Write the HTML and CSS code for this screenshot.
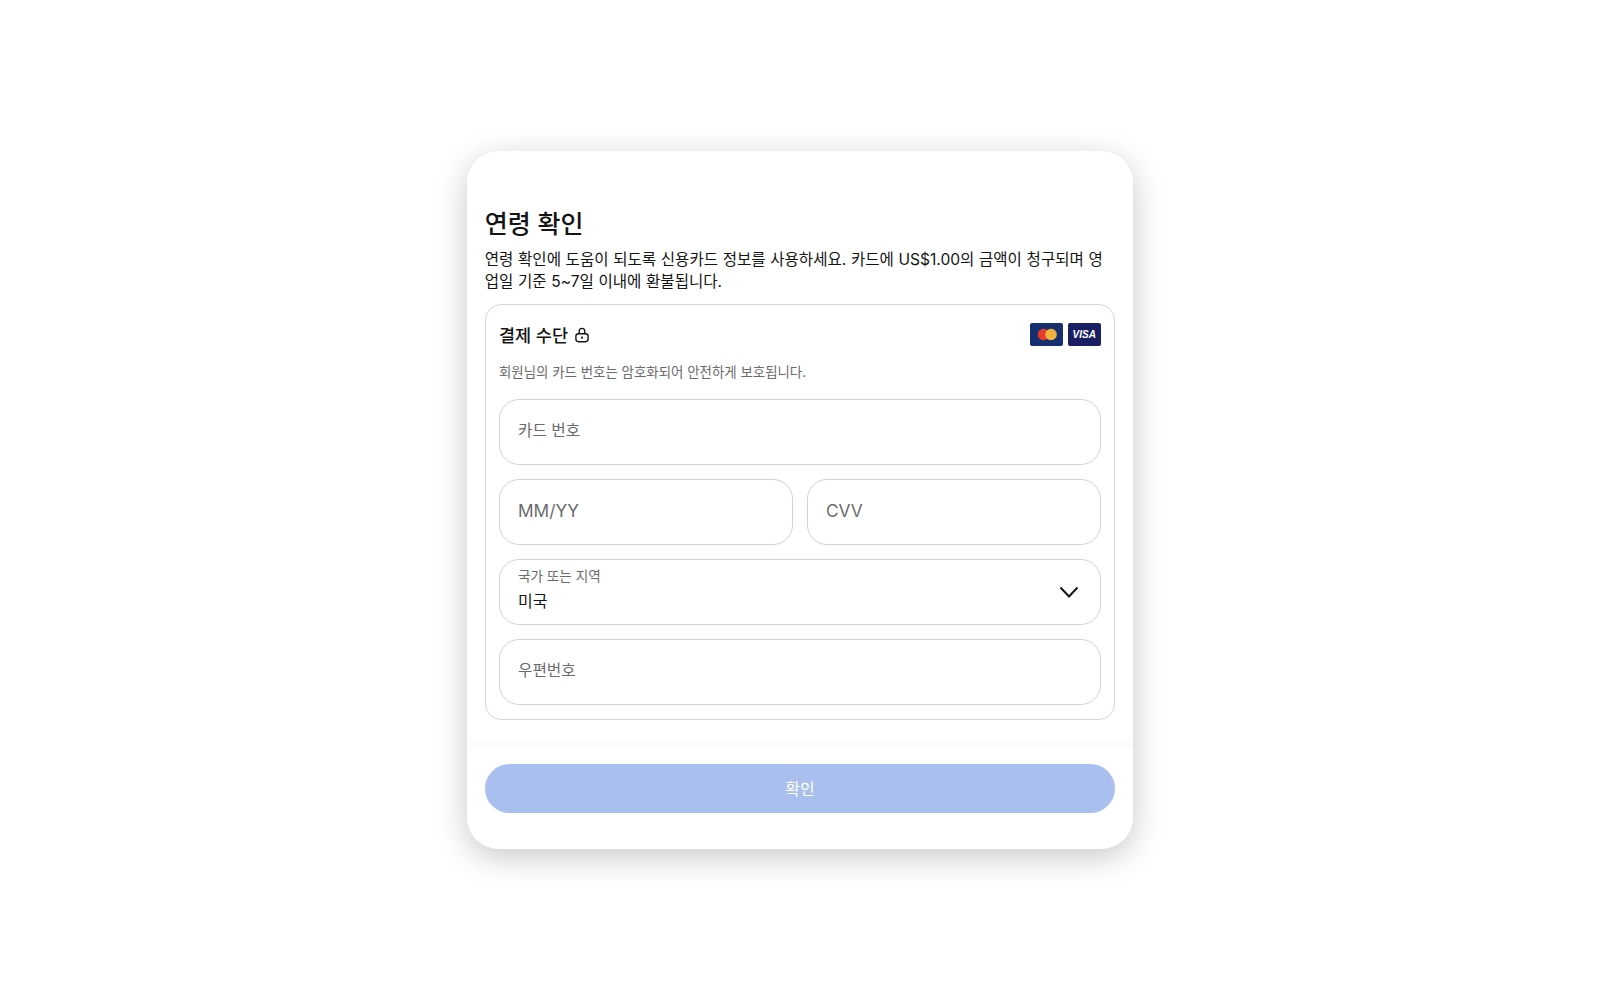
FILE: index.html
```html
<!DOCTYPE html>
<html lang="ko">
<head>
<meta charset="utf-8">
<title>연령 확인</title>
<link rel="stylesheet" href="styles.css">
</head>
<body>
<main class="card">
  <div class="content">
    <h1 class="title">연령 확인</h1>
    <p class="desc">연령 확인에 도움이 되도록 신용카드 정보를 사용하세요. 카드에 US$1.00의 금액이 청구되며 영업일 기준 5~7일 이내에 환불됩니다.</p>
    <section class="pay">
      <div class="pay-head">
        <div class="pay-title">
          <span>결제 수단</span>
          <svg class="lock" viewBox="0 0 16 16" width="16" height="16" fill="none" stroke="#141414" stroke-width="1.4">
            <path d="M5.200 7V4.200a2.800 2.800 0 0 1 5.600 0V7"/>
            <rect x="1.900" y="6.700" width="12.200" height="8" rx="2.600"/>
            <circle cx="8" cy="10.700" r="1.100" fill="#141414" stroke="none"/>
          </svg>
        </div>
        <div class="brands">
          <span class="brand">
            <svg viewBox="0 0 34 23" width="34" height="23"><circle cx="13.500" cy="11.500" r="5.800" fill="#e8392d"/><circle cx="21" cy="11.500" r="5.800" fill="#f2b33d"/></svg>
          </span>
          <span class="brand brand-visa">VISA</span>
        </div>
      </div>
      <p class="note">회원님의 카드 번호는 암호화되어 안전하게 보호됩니다.</p>
      <div class="fields">
        <div class="field"><span class="field-text">카드 번호</span></div>
        <div class="row">
          <div class="field field-latin"><span class="field-text">MM/YY</span></div>
          <div class="field field-latin"><span class="field-text">CVV</span></div>
        </div>
        <div class="field field-select">
          <div class="select-text">
            <span class="select-label">국가 또는 지역</span>
            <span class="select-value">미국</span>
          </div>
          <svg class="chevron" viewBox="0 0 20 14" width="20" height="14" fill="none" stroke="#141414" stroke-width="2"><path d="M1.500 2.500 10 11.500 18.500 2.500"/></svg>
        </div>
        <div class="field"><span class="field-text">우편번호</span></div>
      </div>
    </section>
  </div>
  <div class="footer">
    <button class="confirm" type="button">확인</button>
  </div>
</main>
</body>
</html>
```
FILE: styles.css
```css
* { box-sizing: border-box; }
html, body { margin: 0; height: 100%; }
body {
  background: #fff;
  display: flex;
  align-items: center;
  justify-content: center;
  font-family: "Inter", "Noto Sans CJK KR", sans-serif;
  color: #141414;
}
.card {
  width: 666px;
  height: 698px;
  background: #fff;
  border-radius: 32px;
  box-shadow: 0 8px 32px rgba(0, 0, 0, 0.22);
  display: flex;
  flex-direction: column;
  overflow: hidden;
}
.content {
  padding: 57px 17.75px 0;
  height: 596px;
  background: linear-gradient(#fff 587px, #fafafa 596px);
}
.title {
  margin: 0;
  font-size: 25px;
  font-weight: 500;
  line-height: 32px;
}
.desc {
  margin: 9px 0 0;
  font-size: 15.55px;
  line-height: 21.5px;
  font-weight: 400;
  word-spacing: 0.3px;
}
.pay {
  margin-top: 12px;
  height: 415.5px;
  border: 1.5px solid #d6d6d6;
  border-radius: 16px;
  padding: 13.5px 13.25px 13px;
}
.pay-head {
  height: 32px;
  display: flex;
  align-items: center;
  justify-content: space-between;
}
.pay-title {
  display: flex;
  align-items: center;
  gap: 6px;
  font-size: 17.5px;
  font-weight: 500;
}
.lock { display: block; }
.brands { display: flex; gap: 4.5px; }
.brand {
  width: 33.5px;
  height: 23px;
  background: #16306f;
  border-radius: 2px;
  display: block;
}
.brand svg { display: block; }
.brand-visa {
  background: #1a1f63;
  color: #fff;
  font: italic 700 10px/23px "Liberation Sans", sans-serif;
  text-align: center;
}
.note {
  margin: 10.5px 0 0;
  height: 22px;
  font-size: 13.45px;
  line-height: 22px;
  color: #6b6b6b;
}
.fields {
  margin-top: 16px;
  display: flex;
  flex-direction: column;
  gap: 14px;
}
.row { display: flex; gap: 14px; }
.row .field { flex: 1; }
.field {
  height: 66px;
  border: 1px solid #d2d2d2;
  border-radius: 20px;
  padding: 0 18px;
  display: flex;
  align-items: center;
  font-size: 15.7px;
  color: #6b6b6b;
}
.field-text { margin-bottom: 4.5px; }
.field-latin { font-size: 17.3px; }
.field-latin .field-text { margin-bottom: 3px; }
.field-select { justify-content: space-between; }
.select-text { display: flex; flex-direction: column; margin-bottom: 4px; }
.select-label { font-size: 13.6px; line-height: 18px; color: #6b6b6b; }
.select-value { font-size: 16px; line-height: 25px; margin-top: 4px; color: #141414; }
.chevron { display: block; margin-right: 3px; }
.footer {
  flex: 1;
  padding: 17px 17.75px 0;
  background: #fff;
}
.confirm {
  display: block;
  width: 100%;
  height: 49px;
  border: 0;
  border-radius: 25px;
  background: #a9c0ee;
  color: #fff;
  padding: 0 0 2px;
  font: 400 16px "Noto Sans CJK KR", sans-serif;
}
```
